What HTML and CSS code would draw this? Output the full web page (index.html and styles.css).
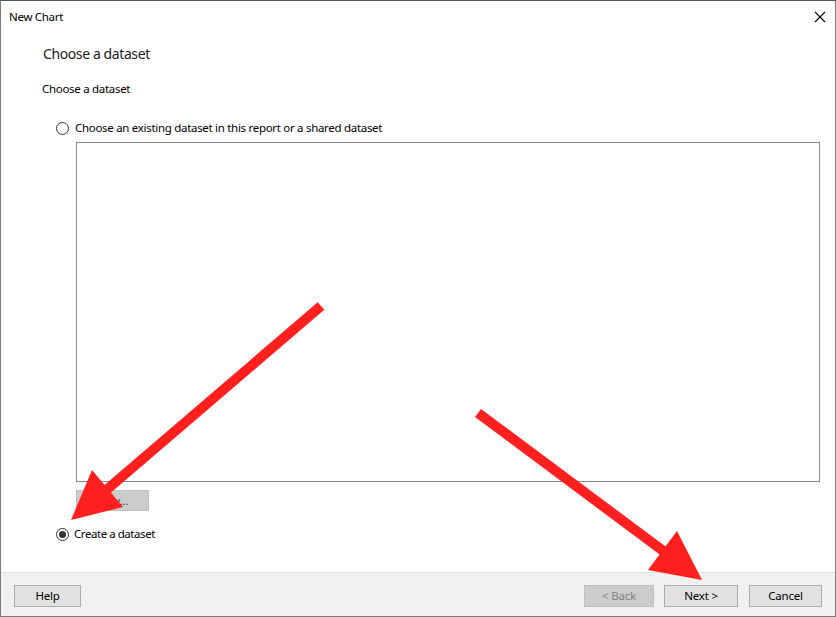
FILE: index.html
```html
<!DOCTYPE html>
<html>
<head>
<meta charset="utf-8">
<title>New Chart</title>
<link rel="stylesheet" href="styles.css">
</head>
<body>
<div class="window">
  <div class="titlebar">
    <span class="title">New Chart</span>
    <svg class="close" width="12" height="12" viewBox="0 0 12 12"><path d="M1 1 L11 11 M11 1 L1 11" stroke="#000" stroke-width="1.1" fill="none"/></svg>
  </div>
  <div class="content">
    <h1 class="heading">Choose a dataset</h1>
    <div class="sublabel">Choose a dataset</div>
    <label class="radio-row first">
      <span class="radio"></span>
      <span>Choose an existing dataset in this report or a shared dataset</span>
    </label>
    <div class="listbox"></div>
    <button class="btn btn-new" disabled>New...</button>
    <label class="radio-row second">
      <span class="radio checked"></span>
      <span>Create a dataset</span>
    </label>
  </div>
  <div class="footer">
    <button class="btn btn-help">Help</button>
    <div class="spacer"></div>
    <button class="btn btn-back" disabled>&lt; Back</button>
    <button class="btn btn-next">Next &gt;</button>
    <button class="btn btn-cancel">Cancel</button>
  </div>
  <svg class="arrows" width="836" height="617" viewBox="0 0 836 617">
    <line x1="321" y1="306" x2="104" y2="492" stroke="#fe1f1f" stroke-width="10"/>
    <polygon points="71,520 92,470 123,507" fill="#fe1f1f"/>
    <line x1="478" y1="413" x2="666" y2="553" stroke="#fe1f1f" stroke-width="10"/>
    <polygon points="702,580 677,531 648,570" fill="#fe1f1f"/>
  </svg>
</div>
</body>
</html>
```

FILE: styles.css
```css
* { box-sizing: border-box; }
html, body { margin: 0; padding: 0; background: #fff; }
body {
  font-family: "Noto Sans", "Open Sans", sans-serif;
  font-size: 11.5px;
  letter-spacing: -0.3px;
  color: #000;
}
.window {
  position: relative;
  width: 836px;
  height: 617px;
  border: 1px solid #7a7a7a;
  border-top-color: #555;
  display: flex;
  flex-direction: column;
  background: #fff;
  overflow: hidden;
}
.titlebar {
  height: 31px;
  display: flex;
  align-items: center;
  justify-content: space-between;
  padding: 0 9px 0 8px;
}
.title { line-height: 16px; padding-top: 1px; }
.close { margin-top: 1px; }
.content {
  padding-left: 41px;
  display: flex;
  flex-direction: column;
  flex: 1;
}
.heading {
  margin: 12px 0 0 1px;
  font-size: 14px;
  letter-spacing: -0.4px;
  font-weight: normal;
  line-height: 20px;
  color: #1a1a1a;
}
.sublabel {
  margin-top: 17px;
  line-height: 16px;
}
.radio-row {
  display: flex;
  align-items: center;
  gap: 6px;
  line-height: 16px;
  margin-left: 14px;
}
.radio-row.first { margin-top: 23px; }
.radio-row.second { margin-top: 15px; gap: 5px; letter-spacing: -0.45px; }
.radio {
  width: 13px;
  height: 13px;
  border: 1px solid #333;
  border-radius: 50%;
  background: #fff;
  display: flex;
  align-items: center;
  justify-content: center;
  flex: none;
}
.radio.checked::after {
  content: "";
  width: 7px;
  height: 7px;
  border-radius: 50%;
  background: #333;
}
.listbox {
  margin: 6px 0 0 34px;
  width: 744px;
  height: 340px;
  border: 1px solid #828790;
  background: #fff;
}
.btn {
  font-family: inherit;
  font-size: 11.5px;
  letter-spacing: -0.2px;
  height: 22px;
  padding: 0;
  border: 1px solid #adadad;
  background: #e1e1e1;
  color: #000;
  line-height: 18px;
}
.btn[disabled] {
  background: #cccccc;
  border-color: #bfbfbf;
  color: #838383;
}
.btn-new {
  margin: 8px 0 0 34px;
  width: 73px;
  height: 21px;
  align-self: flex-start;
}
.btn-new[disabled] { color: #444; }
.footer {
  height: 44px;
  border-top: 1px solid #dfdfdf;
  background: #f0f0f0;
  display: flex;
  align-items: flex-start;
  padding: 12px 13px 0 13px;
}
.spacer { flex: 1; }
.btn-help { width: 67px; }
.btn-back { width: 70px; }
.btn-next { width: 74px; margin-left: 10px; }
.btn-cancel { width: 73px; margin-left: 11px; }
.arrows {
  position: absolute;
  left: -1px;
  top: -1px;
  pointer-events: none;
}
```
